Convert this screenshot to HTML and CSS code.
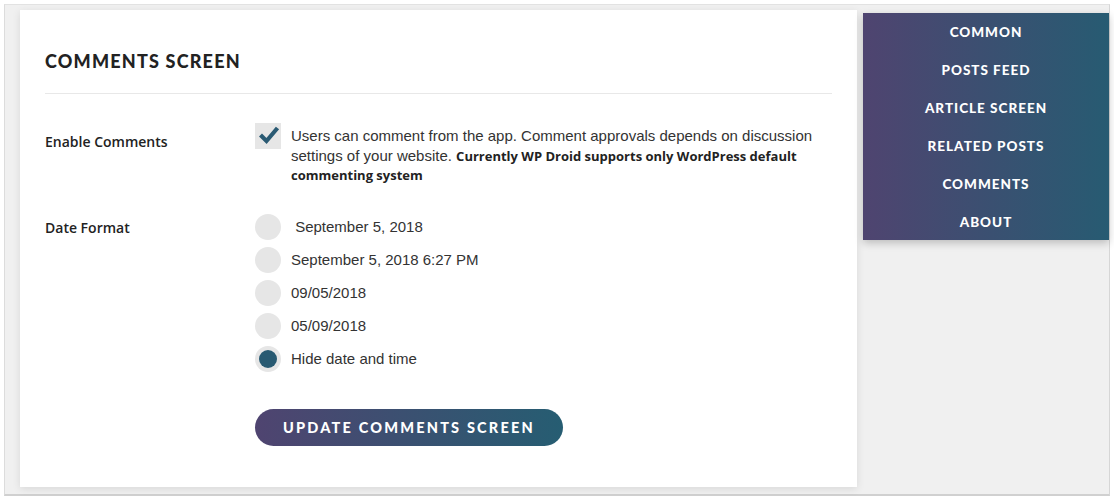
FILE: index.html
```html
<!DOCTYPE html>
<html>
<head>
<meta charset="utf-8">
<link rel="stylesheet" href="styles.css">
</head>
<body>
<div class="frame">
  <main class="card">
    <h2 class="title">COMMENTS SCREEN</h2>
    <div class="divider"></div>
    <div class="row row-enable">
      <div class="label">Enable Comments</div>
      <div class="control check-control">
        <span class="checkbox">
          <svg width="22" height="20" viewBox="0 0 22 20"><path d="M2.5 10 L8.5 16 L19.5 3" fill="none" stroke="#2a5a73" stroke-width="4.2" stroke-linecap="butt" stroke-linejoin="miter"/></svg>
        </span>
        <p class="desc">Users can comment from the app. Comment approvals depends on discussion settings of your website. <b>Currently WP Droid supports only WordPress default commenting system</b></p>
      </div>
    </div>
    <div class="row row-date">
      <div class="label">Date Format</div>
      <div class="control radios">
        <div class="radio-item"><span class="radio"></span><span class="radio-text">&nbsp;September 5, 2018</span></div>
        <div class="radio-item"><span class="radio"></span><span class="radio-text">September 5, 2018 6:27 PM</span></div>
        <div class="radio-item"><span class="radio"></span><span class="radio-text">09/05/2018</span></div>
        <div class="radio-item"><span class="radio"></span><span class="radio-text">05/09/2018</span></div>
        <div class="radio-item"><span class="radio checked"></span><span class="radio-text">Hide date and time</span></div>
      </div>
    </div>
    <div class="actions">
      <button class="btn">UPDATE COMMENTS SCREEN</button>
    </div>
  </main>
  <nav class="menu">
    <a>COMMON</a>
    <a>POSTS FEED</a>
    <a>ARTICLE SCREEN</a>
    <a>RELATED POSTS</a>
    <a>COMMENTS</a>
    <a>ABOUT</a>
  </nav>
</div>
</body>
</html>
```

FILE: styles.css
```css
html, body {
  margin: 0;
  padding: 0;
  background: #ffffff;
}
body {
  font-family: "Liberation Sans", Arial, sans-serif;
  color: #333;
}
.frame {
  margin: 4px 0 0 4px;
  width: 1106px;
  height: 492px;
  box-sizing: border-box;
  background: #f0f0f0;
  border-top: 1px solid #e2e2e2;
  border-left: 1px solid #dcdcdc;
  border-right: 1px solid #d6d6d6;
  border-bottom: 2px solid #d0d0d0;
  display: flex;
  align-items: flex-start;
}
.card {
  margin: 5px 0 0 15px;
  width: 837px;
  height: 477px;
  box-sizing: border-box;
  background: #fff;
  box-shadow: 0 2px 8px rgba(0,0,0,0.10);
  padding: 40px 25px 0 25px;
}
.title {
  margin: 0;
  font-family: "Lato", sans-serif;
  font-weight: 900;
  font-size: 18px;
  letter-spacing: 1.2px;
  color: #222;
  line-height: 22px;
}
.divider {
  height: 1px;
  background: #e8e8e8;
  margin-top: 21px;
}
.row {
  display: flex;
}
.label {
  width: 210px;
  flex: none;
  font-family: "Open Sans", sans-serif;
  font-weight: 600;
  font-size: 14px;
  color: #222;
}
.row-enable {
  margin-top: 28px;
}
.row-enable .label {
  padding-top: 10px;
}
.check-control {
  display: flex;
  align-items: flex-start;
}
.checkbox {
  width: 26px;
  height: 26px;
  background: #e6e6e6;
  flex: none;
  display: flex;
  align-items: center;
  justify-content: center;
  margin-top: 1px;
}
.checkbox svg {
  margin-top: -3px;
  margin-left: 2px;
}
.desc {
  margin: 0 0 0 10px;
  padding-top: 4px;
  width: 540px;
  font-size: 15px;
  line-height: 19.5px;
  color: #333;
}
.desc b {
  font-family: "Open Sans", sans-serif;
  font-weight: 700;
  font-size: 13px;
  line-height: 1;
  color: #222;
}
.row-date {
  margin-top: 29px;
}
.row-date .label {
  padding-top: 4px;
}
.radios {
  display: flex;
  flex-direction: column;
  gap: 7px;
}
.radio-item {
  display: flex;
  align-items: center;
  height: 26px;
}
.radio {
  width: 26px;
  height: 26px;
  border-radius: 50%;
  background: #e6e6e6;
  flex: none;
  display: flex;
  align-items: center;
  justify-content: center;
}
.radio.checked::after {
  content: "";
  width: 18px;
  height: 18px;
  border-radius: 50%;
  background: #285a72;
}
.radio-text {
  margin-left: 10px;
  font-size: 15px;
  color: #333;
}
.actions {
  padding: 37px 0 0 210px;
}
.btn {
  border: none;
  height: 37px;
  width: 308px;
  border-radius: 19px;
  background: linear-gradient(90deg, #4f4470 0%, #265d72 100%);
  color: #fff;
  font-family: "Lato", sans-serif;
  font-weight: 900;
  font-size: 14.5px;
  letter-spacing: 2.2px;
  padding: 0;
  cursor: pointer;
}
.menu {
  margin: 8px 0 0 6px;
  width: 246px;
  height: 227px;
  box-sizing: border-box;
  background: linear-gradient(90deg, #4f4470 0%, #275b72 100%);
  box-shadow: 0 3px 8px rgba(0,0,0,0.22);
  display: flex;
  flex-direction: column;
  align-items: center;
  padding-top: 0;
}
.menu a {
  display: block;
  color: #fff;
  font-family: "Lato", sans-serif;
  font-weight: 900;
  font-size: 13.5px;
  letter-spacing: 1px;
  line-height: 38px;
  height: 38px;
}
```
